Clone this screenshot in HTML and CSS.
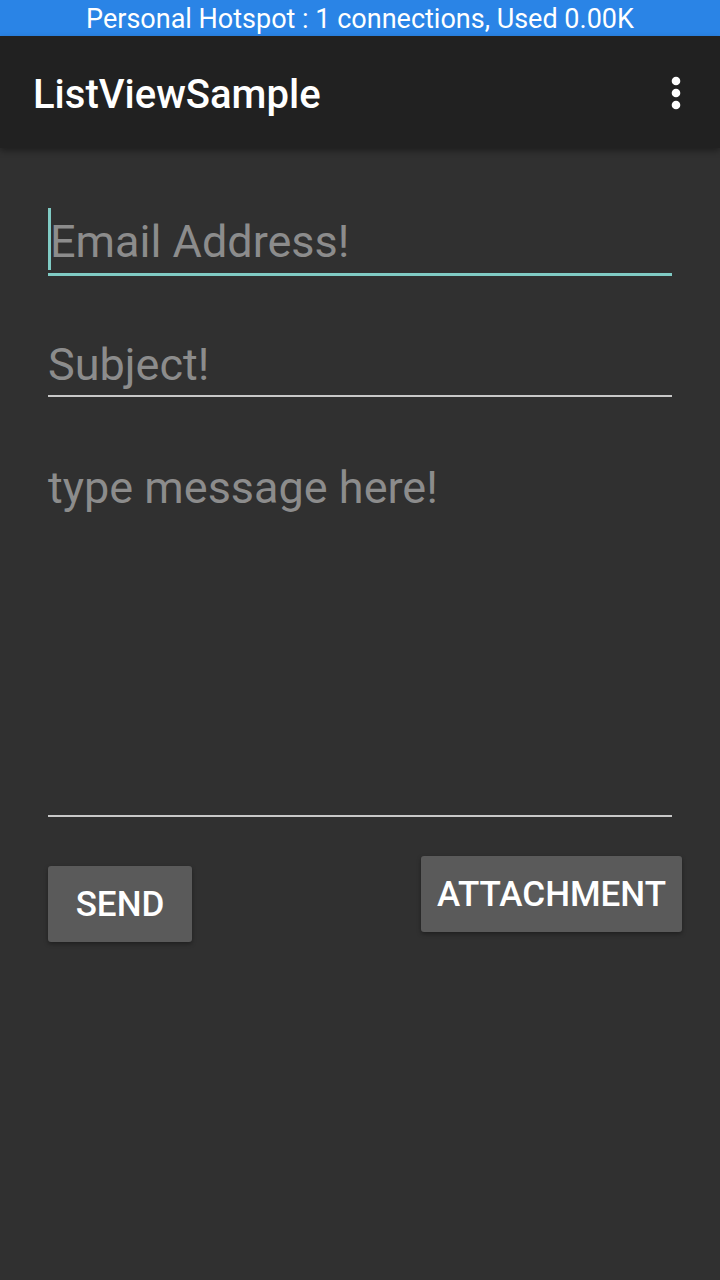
FILE: index.html
```html
<!DOCTYPE html>
<html>
<head>
<meta charset="utf-8">
<link rel="stylesheet" href="styles.css">
</head>
<body>
<div class="status">Personal Hotspot : 1 connections, Used 0.00K</div>
<header class="appbar">
  <div class="title">ListViewSample</div>
  <svg class="menu" width="12" height="36" viewBox="0 0 12 36"><circle cx="6" cy="6" r="4.3" fill="#fff"/><circle cx="6" cy="18" r="4.3" fill="#fff"/><circle cx="6" cy="30" r="4.3" fill="#fff"/></svg>
</header>
<main class="form">
  <div class="field focused"><span class="caret"></span><span class="hint email">Email Address!</span></div>
  <div class="field subject"><span class="hint">Subject!</span></div>
  <div class="field message"><span class="hint">type message here!</span></div>
  <div class="buttons">
    <button class="btn send">SEND</button>
    <button class="btn attach">ATTACHMENT</button>
  </div>
</main>
</body>
</html>
```
FILE: styles.css
```css
html, body {
  margin: 0;
  padding: 0;
  background: #303030;
  font-family: Roboto, "Noto Sans", sans-serif;
  width: 720px;
  height: 1280px;
  overflow: hidden;
}
.status {
  height: 36px;
  background: #2a84e6;
  color: #fff;
  font-size: 27px;
  line-height: 38px;
  text-align: center;
  white-space: nowrap;
}
.appbar {
  height: 112px;
  background: #212121;
  display: flex;
  align-items: center;
  justify-content: space-between;
  padding: 0 38px 0 33px;
  box-shadow: 0 3px 6px rgba(0,0,0,0.35);
  position: relative;
  z-index: 1;
}
.title {
  color: #fff;
  font-size: 40px;
  font-weight: 500;
  margin-top: 4px;
}
.menu {
  margin-top: 2px;
}
.form {
  padding: 48px 48px 0 48px;
}
.field {
  position: relative;
  box-sizing: border-box;
  padding: 20px 0 5px 0;
  border-bottom: 2px solid #c8c8c8;
}
.field.focused {
  border-bottom: 3px solid #80cbc4;
}
.hint {
  display: block;
  color: #8c8c8c;
  font-size: 45px;
  line-height: 52px;
  white-space: nowrap;
}
.hint.email {
  padding-left: 2px;
}
.caret {
  position: absolute;
  left: 0;
  top: 12px;
  width: 3px;
  height: 62px;
  background: #80cbc4;
}
.subject {
  margin-top: 43px;
  padding-bottom: 4px;
}
.message {
  margin-top: 45px;
  height: 375px;
}
.buttons {
  display: flex;
  justify-content: space-between;
  align-items: flex-start;
  margin-top: 39px;
  margin-right: -10px;
}
.btn {
  border: none;
  background: #5a5a5a;
  color: #fff;
  font-family: Roboto, "Noto Sans", sans-serif;
  font-weight: 500;
  font-size: 35px;
  height: 76px;
  border-radius: 3px;
  box-shadow: 0 2px 4px rgba(0,0,0,0.35);
  padding: 0;
}
.send {
  width: 144px;
  margin-top: 10px;
}
.attach {
  width: 261px;
}
```
